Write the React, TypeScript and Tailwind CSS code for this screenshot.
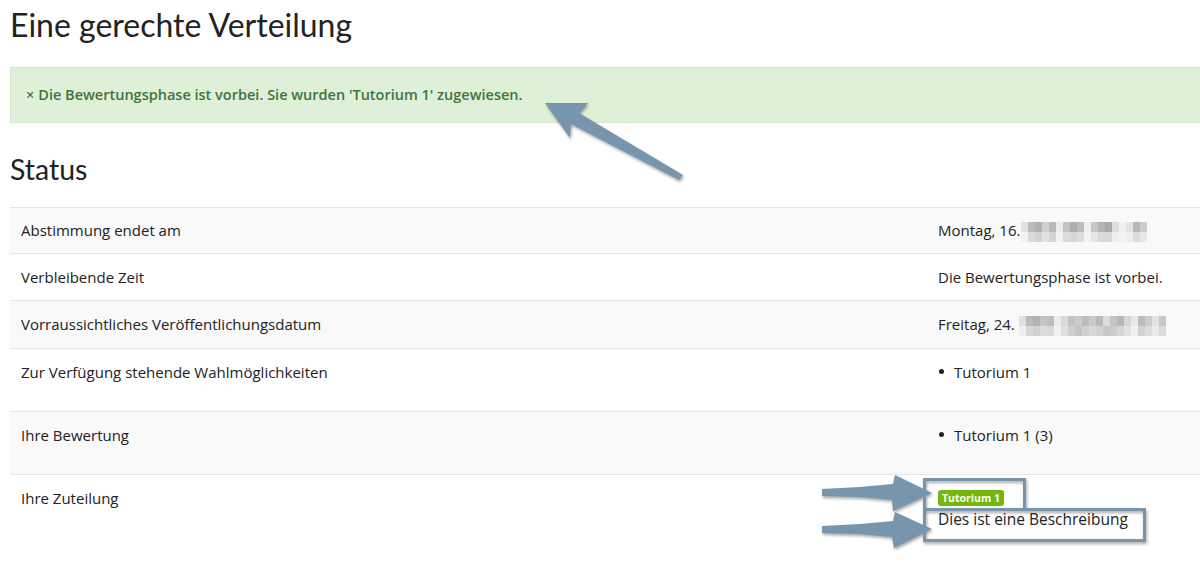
import React from 'react'

const font = { fontFamily: '"Open Sans", "Noto Sans", sans-serif' }
const headFont = { fontFamily: '"Lato", "Open Sans", sans-serif' }

// blurred (pixelated) date fragments
const mosaicA = [
  ['#e2e2e2', '#bcbcbc', '#b0b0b0', '#cfcfcf', '#b8b8b8', '#ececec', '#c4c4c4', '#adadad', '#bdbdbd', '#eeeeee', '#c6c6c6', '#b4b4b4', '#a8a8a8', '#dedede', '#f0f0f0', '#e4e4e4', '#b8b8b8', '#cccccc'],
  ['#f0f0f0', '#dadada', '#d2d2d2', '#e2e2e2', '#d4d4d4', '#f2f2f2', '#dcdcdc', '#d6d6d6', '#dedede', '#f4f4f4', '#e4e4e4', '#dadada', '#d8d8d8', '#eeeeee', '#f4f4f4', '#eeeeee', '#dcdcdc', '#e8e8e8'],
]
const mosaicB = [
  ['#e0e0e0', '#bababa', '#b2b2b2', '#c4c4c4', '#bebebe', '#ececec', '#dadada', '#c2c2c2', '#cccccc', '#bcbcbc', '#cacaca', '#bababa', '#dcdcdc', '#c4c4c4', '#b8b8b8', '#d6d6d6', '#e8e8e8', '#bcbcbc', '#cccccc', '#e2e2e2', '#c8c8c8'],
  ['#eeeeee', '#d8d8d8', '#d0d0d0', '#dcdcdc', '#dadada', '#f2f2f2', '#e0e0e0', '#d0d0d0', '#c6c6c6', '#d0d0d0', '#d8d8d8', '#d2d2d2', '#c8c8c8', '#cccccc', '#d6d6d6', '#e2e2e2', '#f0f0f0', '#d2d2d2', '#dcdcdc', '#eaeaea', '#dcdcdc'],
]

function Mosaic({ rows }: { rows: string[][] }) {
  return (
    <span className="inline-flex flex-col align-middle">
      {rows.map((row, i) => (
        <span key={i} className="flex">
          {row.map((c, j) => (
            <span key={j} className="block h-[10px] w-[7px]" style={{ background: c }} />
          ))}
        </span>
      ))}
    </span>
  )
}

type Row = { label: string; value: React.ReactNode }

function Bullet({ children }: { children: React.ReactNode }) {
  return (
    <ul className="mb-[16px]">
      <li className="flex items-center">
        <span className="mr-[10px] ml-[1px] block h-[5px] w-[5px] rounded-full bg-[#222]" />
        {children}
      </li>
    </ul>
  )
}

const rows: Row[] = [
  {
    label: 'Abstimmung endet am',
    value: (
      <span className="flex items-center">
        Montag, 16.<span className="ml-[1px]"><Mosaic rows={mosaicA} /></span>
      </span>
    ),
  },
  { label: 'Verbleibende Zeit', value: 'Die Bewertungsphase ist vorbei.' },
  {
    label: 'Vorraussichtliches Veröffentlichungsdatum',
    value: (
      <span className="flex items-center">
        Freitag, 24.<span className="ml-[4px]"><Mosaic rows={mosaicB} /></span>
      </span>
    ),
  },
  { label: 'Zur Verfügung stehende Wahlmöglichkeiten', value: <Bullet>Tutorium 1</Bullet> },
  { label: 'Ihre Bewertung', value: <Bullet>Tutorium 1 (3)</Bullet> },
  {
    label: 'Ihre Zuteilung',
    value: (
      <div className="pt-[3px]">
        <div className="flex">
          <span className="block rounded-[3px] bg-[#72b70a] px-[4px] text-[10.5px] font-bold leading-[16px] text-white">
            Tutorium 1
          </span>
        </div>
        <p className="mt-[2px] text-[15.5px] text-[#222]">Dies ist eine Beschreibung</p>
      </div>
    ),
  },
]

function Annotations() {
  const c = '#7796ad'
  return (
    <svg
      className="pointer-events-none absolute left-0 top-0"
      width="1200"
      height="564"
      style={{ filter: 'drop-shadow(1px 2px 1.5px rgba(0,0,0,0.35))' }}
    >
      {/* arrow pointing to the alert */}
      <polygon fill={c} points="545,103 588,103 579,113 683,175 679,180 571,124 570,138" />
      {/* arrows pointing at the assignment */}
      <polygon fill={c} points="822,489 860,487 893,484 895,475 932,493 893,511 892,500 860,497 822,496" />
      <polygon fill={c} points="822,526 860,524 893,521 895,512 932,529 894,548 892,537 860,534 822,533" />
      <rect x="924.5" y="479.5" width="100" height="30" fill="none" stroke={c} strokeWidth="3" />
      <rect x="924.5" y="509.5" width="220" height="31" fill="none" stroke={c} strokeWidth="3" />
    </svg>
  )
}

export default function App() {
  return (
    <div className="relative h-[564px] w-[1200px] overflow-hidden bg-white text-[#222]" style={font}>
      <div className="w-[1240px] pl-[10px]">
        <h1 className="pt-[5px] text-[32px] leading-[40px] font-normal text-[#222]" style={headFont}>
          Eine gerechte Verteilung
        </h1>

        <div className="mt-[22px] border border-[#d6e9c6] bg-[#dff0d8] px-[15px] py-[17px] text-[14.5px] leading-[20px] font-semibold text-[#3c763d]">
          <span className="mr-[4px]">×</span>Die Bewertungsphase ist vorbei. Sie wurden 'Tutorium 1' zugewiesen.
        </div>

        <h2 className="mt-[29px] text-[28.5px] leading-[34px] font-normal text-[#222]" style={headFont}>
          Status
        </h2>

        <table className="mt-[21px] w-full border-collapse text-[15px] leading-[22px]">
          <tbody>
            {rows.map((r, i) => (
              <tr key={r.label} className={`border-t border-[#e6e6e6] ${i % 2 === 0 ? 'bg-[#f9f9f9]' : 'bg-white'}`}>
                <td className={`w-[917px] px-[11px] align-top ${i === 0 ? 'py-[11px]' : 'py-[12px]'}`}>{r.label}</td>
                <td className={`px-[11px] align-top ${i === 0 ? 'py-[11px]' : 'py-[12px]'}`}>{r.value}</td>
              </tr>
            ))}
          </tbody>
        </table>
      </div>
      <Annotations />
    </div>
  )
}
